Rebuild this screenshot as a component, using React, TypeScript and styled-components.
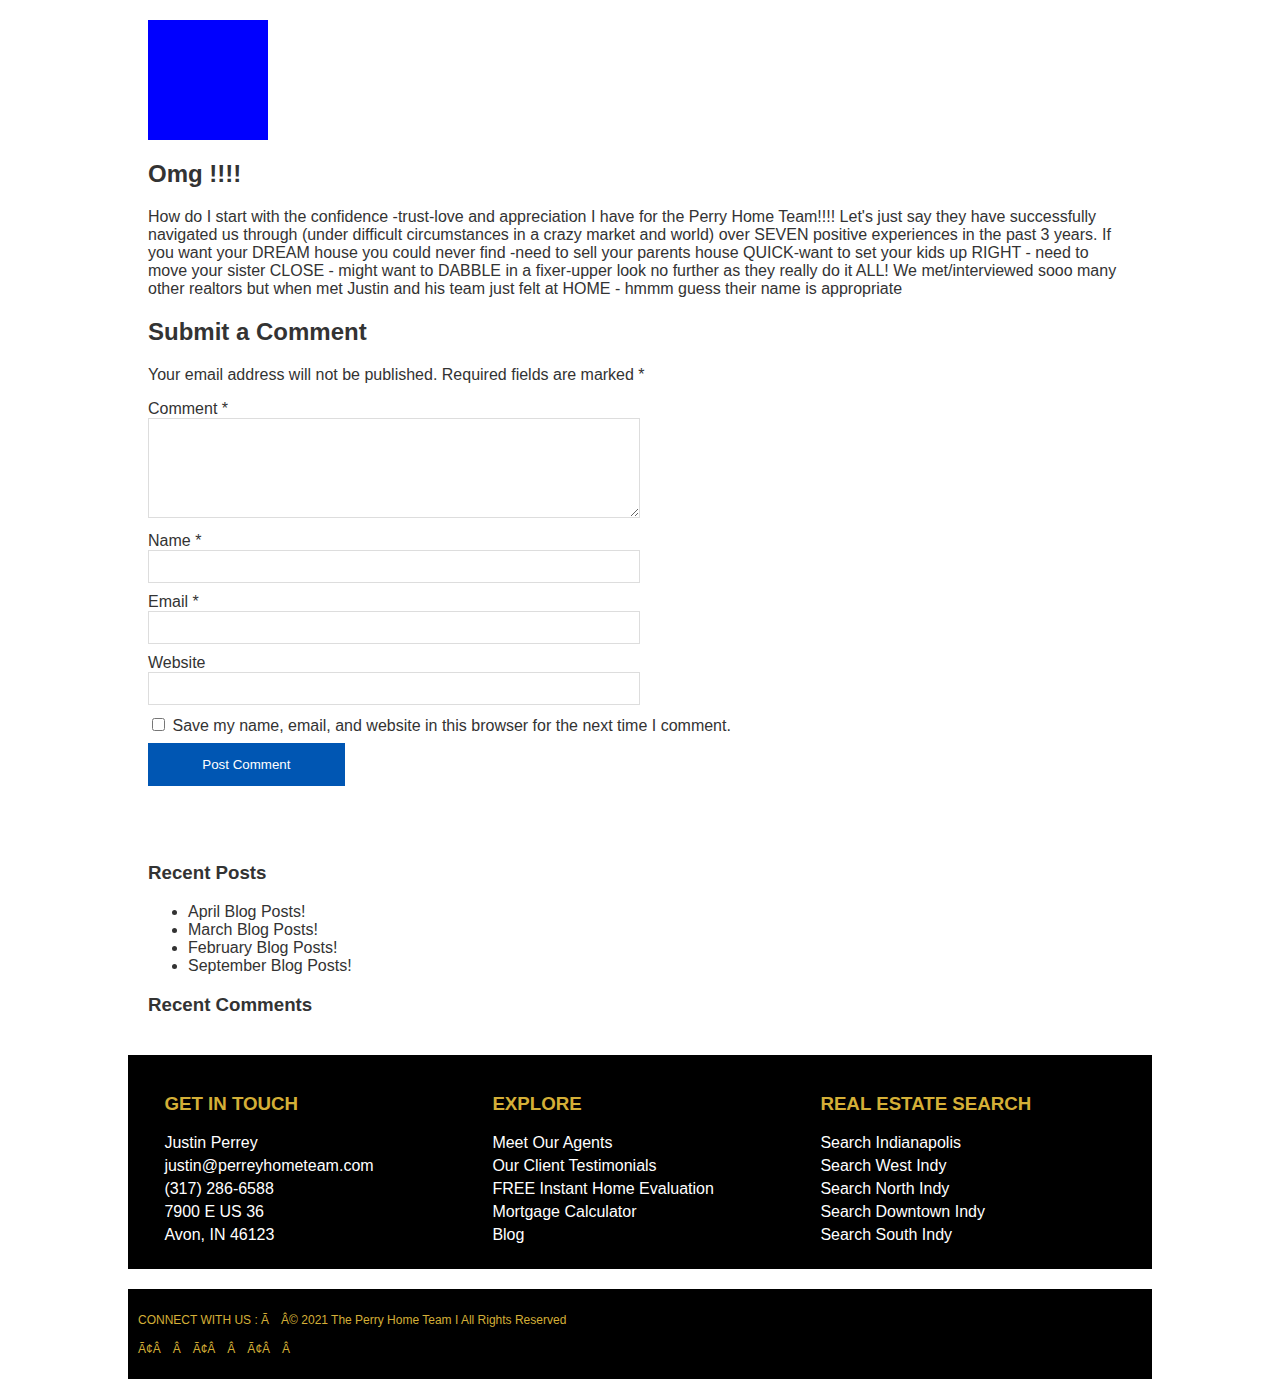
import React from "react";
import styled, { createGlobalStyle } from "styled-components";

const GlobalStyle = createGlobalStyle`
  *, *::before, *::after {
    box-sizing: border-box;
  }

  body {
    margin: 0;
    background: #fff;
    color: #333;
    font-family: Arial, "Liberation Sans", sans-serif;
    font-size: 16px;
    line-height: 18px;
  }
`;

const Page = styled.div`
  width: 80%;
  margin: 0 auto;
`;

const Main = styled.main`
  padding: 20px 20px 0;
`;

const Thumbnail = styled.div`
  width: 120px;
  height: 120px;
  background: #00f;
`;

const Title = styled.h2`
  margin: 20px 0;
  font-size: 24px;
  line-height: 28px;
`;

const Subtitle = styled.h3`
  margin: 19px 0;
  line-height: 22px;
`;

const Paragraph = styled.p`
  margin: 0 0 15px;
`;

const Field = styled.div`
  display: flex;
  flex-direction: column;
  width: 50%;
  margin-bottom: 9px;
`;

const FieldLabel = styled.label`
  line-height: 19px;
`;

const TextInput = styled.input`
  width: 100%;
  height: 33px;
  padding: 8px;
  border: 1px solid #ddd;
`;

const TextArea = styled.textarea`
  width: 100%;
  height: 100px;
  margin-bottom: 4px;
  padding: 8px;
  border: 1px solid #ddd;
  resize: both;
`;

const Consent = styled.div`
  padding-top: 1px;
  line-height: 19px;
`;

const SubmitButton = styled.button`
  display: block;
  width: 20%;
  height: 43px;
  margin-top: 8px;
  border: 0;
  background: #0056b3;
  color: #fff;
  font-family: inherit;
`;

const Sidebar = styled.aside`
  padding: 57px 20px 20px;
`;

const PostList = styled.ul`
  margin: 0;
  padding-left: 40px;
`;

const Footer = styled.footer`
  display: grid;
  grid-template-columns: repeat(3, 1fr);
  padding: 20px;
  background: #000;
  color: #fff;
`;

const FooterColumn = styled.section`
  padding: 0 5%;
`;

const FooterHeading = styled.h3`
  margin: 18px 0 17px;
  color: #d4af37;
  line-height: 21px;
`;

const FooterList = styled.ul`
  margin: 0;
  padding: 0 0 3px;
  list-style: none;
  line-height: 23px;
`;

const FooterLink = styled.a`
  color: inherit;
  text-decoration: none;
`;

const Copyright = styled.div`
  margin-top: 20px;
  padding: 23px 10px 21px;
  background: #000;
  color: #d4af37;
  font-size: 12px;
  line-height: 17px;
`;

const CopyrightLine = styled.p`
  margin: 0;

  & + & {
    margin-top: 12px;
  }
`;

const fields = [
  { id: "author", label: "Name *", type: "text" },
  { id: "email", label: "Email *", type: "email" },
  { id: "url", label: "Website", type: "url" },
];

const posts = [
  "April Blog Posts!",
  "March Blog Posts!",
  "February Blog Posts!",
  "September Blog Posts!",
];

type FooterItem = { text: string; href?: string };

const footerColumns: { heading: string; items: FooterItem[] }[] = [
  {
    heading: "GET IN TOUCH",
    items: [
      { text: "Justin Perrey" },
      { text: "justin@perreyhometeam.com", href: "mailto:justin@perreyhometeam.com" },
      { text: "(317) 286-6588", href: "tel:+13172866588" },
      { text: "7900 E US 36" },
      { text: "Avon, IN 46123" },
    ],
  },
  {
    heading: "EXPLORE",
    items: [
      { text: "Meet Our Agents", href: "#agents" },
      { text: "Our Client Testimonials", href: "#testimonials" },
      { text: "FREE Instant Home Evaluation", href: "#evaluation" },
      { text: "Mortgage Calculator", href: "#calculator" },
      { text: "Blog", href: "#blog" },
    ],
  },
  {
    heading: "REAL ESTATE SEARCH",
    items: [
      { text: "Search Indianapolis", href: "#indianapolis" },
      { text: "Search West Indy", href: "#west" },
      { text: "Search North Indy", href: "#north" },
      { text: "Search Downtown Indy", href: "#downtown" },
      { text: "Search South Indy", href: "#south" },
    ],
  },
];

export default function App() {
  return (
    <>
      <GlobalStyle />
      <Page>
        <Main>
          <article>
            <Thumbnail />
            <Title>Omg !!!!</Title>
            <Paragraph>
              How do I start with the confidence -trust-love and appreciation I have for the Perry
              Home Team!!!! Let's just say they have successfully navigated us through (under
              difficult circumstances in a crazy market and world) over SEVEN positive experiences
              in the past 3 years. If you want your DREAM house you could never find -need to sell
              your parents house QUICK-want to set your kids up RIGHT - need to move your sister
              CLOSE - might want to DABBLE in a fixer-upper look no further as they really do it
              ALL! We met/interviewed sooo many other realtors but when met Justin and his team
              just felt at HOME - hmmm guess their name is appropriate
            </Paragraph>
          </article>
          <Title>Submit a Comment</Title>
          <form onSubmit={(event) => event.preventDefault()}>
            <Paragraph>
              Your email address will not be published. Required fields are marked *
            </Paragraph>
            <Field>
              <FieldLabel htmlFor="comment">Comment *</FieldLabel>
              <TextArea id="comment" name="comment" />
            </Field>
            {fields.map((field) => (
              <Field key={field.id}>
                <FieldLabel htmlFor={field.id}>{field.label}</FieldLabel>
                <TextInput id={field.id} name={field.id} type={field.type} />
              </Field>
            ))}
            <Consent>
              <input id="consent" name="consent" type="checkbox" />{" "}
              <label htmlFor="consent">
                Save my name, email, and website in this browser for the next time I comment.
              </label>
            </Consent>
            <SubmitButton type="submit">Post Comment</SubmitButton>
          </form>
        </Main>
        <Sidebar>
          <Subtitle>Recent Posts</Subtitle>
          <PostList>
            {posts.map((post) => (
              <li key={post}>{post}</li>
            ))}
          </PostList>
          <Subtitle>Recent Comments</Subtitle>
        </Sidebar>
        <Footer>
          {footerColumns.map((column) => (
            <FooterColumn key={column.heading}>
              <FooterHeading>{column.heading}</FooterHeading>
              <FooterList>
                {column.items.map((item) => (
                  <li key={item.text}>
                    {item.href ? <FooterLink href={item.href}>{item.text}</FooterLink> : item.text}
                  </li>
                ))}
              </FooterList>
            </FooterColumn>
          ))}
        </Footer>
        <Copyright>
          <CopyrightLine>
            CONNECT WITH US : Ã&emsp;Â© 2021 The Perry Home Team I All Rights Reserved
          </CopyrightLine>
          <CopyrightLine>Ã¢Â&emsp;Â&emsp;Ã¢Â&emsp;Â&emsp;Ã¢Â&emsp;Â</CopyrightLine>
        </Copyright>
      </Page>
    </>
  );
}
